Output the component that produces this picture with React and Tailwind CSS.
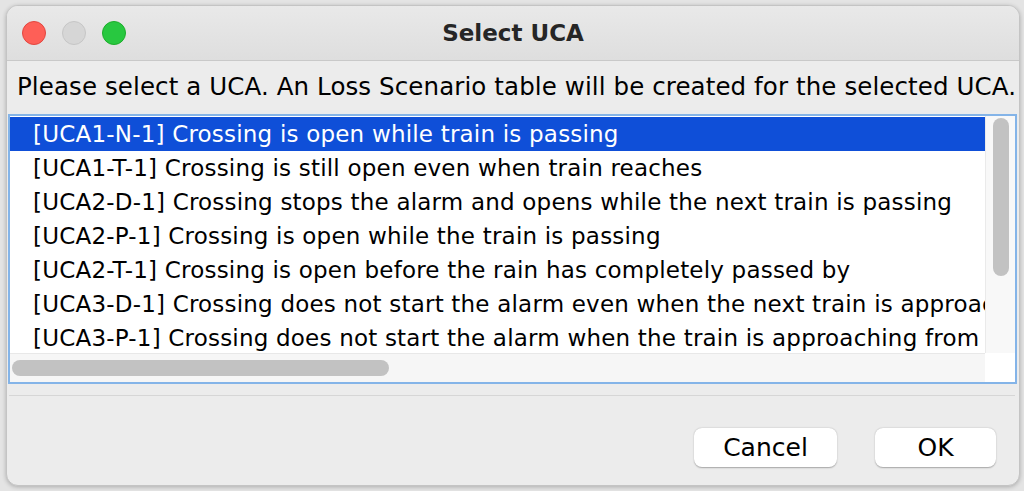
import { useState } from "react";

const ucas = [
    "[UCA1-N-1] Crossing is open while train is passing",
    "[UCA1-T-1] Crossing is still open even when train reaches",
    "[UCA2-D-1] Crossing stops the alarm and opens while the next train is passing",
    "[UCA2-P-1] Crossing is open while the train is passing",
    "[UCA2-T-1] Crossing is open before the rain has completely passed by",
    "[UCA3-D-1] Crossing does not start the alarm even when the next train is approaching",
    "[UCA3-P-1] Crossing does not start the alarm when the train is approaching from the other side",
];

export default function App() {
    const [selected, setSelected] = useState(0);

    return (
        <div
            className="w-[1024px] h-[491px] bg-[#e4e4e4] pt-[5px] pl-[6px] pr-[4px] pb-[5px] overflow-hidden"
            style={{ fontFamily: '"DejaVu Sans", "Liberation Sans", sans-serif' }}
        >
            <div className="h-full flex flex-col rounded-[12px] border border-[#c4c4c4] bg-[#ececec] shadow-[0_1px_4px_rgba(0,0,0,0.25)] overflow-hidden">
                {/* title bar */}
                <div className="relative h-[55px] shrink-0 flex items-center justify-center bg-gradient-to-b from-[#e9e9e9] to-[#dedede] border-b border-[#c9c9c9]">
                    <div className="absolute left-[15px] top-[15px] flex gap-[16px]">
                        <span className="w-[24px] h-[24px] rounded-full bg-[#fe5f57] border border-[#e2463f]" />
                        <span className="w-[24px] h-[24px] rounded-full bg-[#d6d6d6] border border-[#c6c6c6]" />
                        <span className="w-[24px] h-[24px] rounded-full bg-[#28c840] border border-[#1dad2b]" />
                    </div>
                    <h1 className="text-[23px] font-bold text-[#262626]">Select UCA</h1>
                </div>

                {/* message */}
                <div className="h-[53px] shrink-0 flex items-center pl-[10px] text-[24.5px] tracking-[0.1px] text-black whitespace-nowrap">
                    Please select a UCA. An Loss Scenario table will be created for the selected UCA.
                </div>

                {/* list */}
                <div className="ml-[1px] mr-[2px] h-[270px] shrink-0 border-2 border-[#84b4e8] bg-white flex flex-col">
                    <div className="flex h-[237px]">
                        <div className="flex-1 min-w-0 pt-[1px] overflow-hidden">
                            {ucas.map((u, i) => (
                                <div
                                    key={u}
                                    onClick={() => setSelected(i)}
                                    className={
                                        "h-[34px] flex items-center pl-[23px] text-[23px] tracking-[0.2px] whitespace-nowrap " +
                                        (selected === i ? "bg-[#0f4fd8] text-white" : "text-black")
                                    }
                                >
                                    {u}
                                </div>
                            ))}
                        </div>
                        <div className="w-[30px] shrink-0 bg-[#f8f8f8] border-l border-[#eaeaea] pt-[2px] pl-[7px]">
                            <div className="w-[16px] h-[158px] rounded-full bg-[#c2c2c2]" />
                        </div>
                    </div>
                    <div className="flex flex-1">
                        <div className="flex-1 bg-[#f6f6f6] border-t border-[#e8e8e8] pt-[6px] pl-[2px]">
                            <div className="w-[377px] h-[16px] rounded-full bg-[#c2c2c2]" />
                        </div>
                        <div className="w-[30px] bg-white" />
                    </div>
                </div>

                <div className="mt-[11px] ml-[2px] mr-[4px] h-px bg-[#d6d6d6]" />

                {/* buttons */}
                <div className="flex justify-end gap-[38px] pr-[23px] pt-[32px]">
                    <button className="w-[143px] h-[39px] rounded-[8px] bg-white text-[25px] text-black shadow-[0_0.5px_1.5px_rgba(0,0,0,0.3)]">
                        Cancel
                    </button>
                    <button className="w-[121px] h-[39px] rounded-[8px] bg-white text-[25px] text-black shadow-[0_0.5px_1.5px_rgba(0,0,0,0.3)]">
                        OK
                    </button>
                </div>
            </div>
        </div>
    );
}
